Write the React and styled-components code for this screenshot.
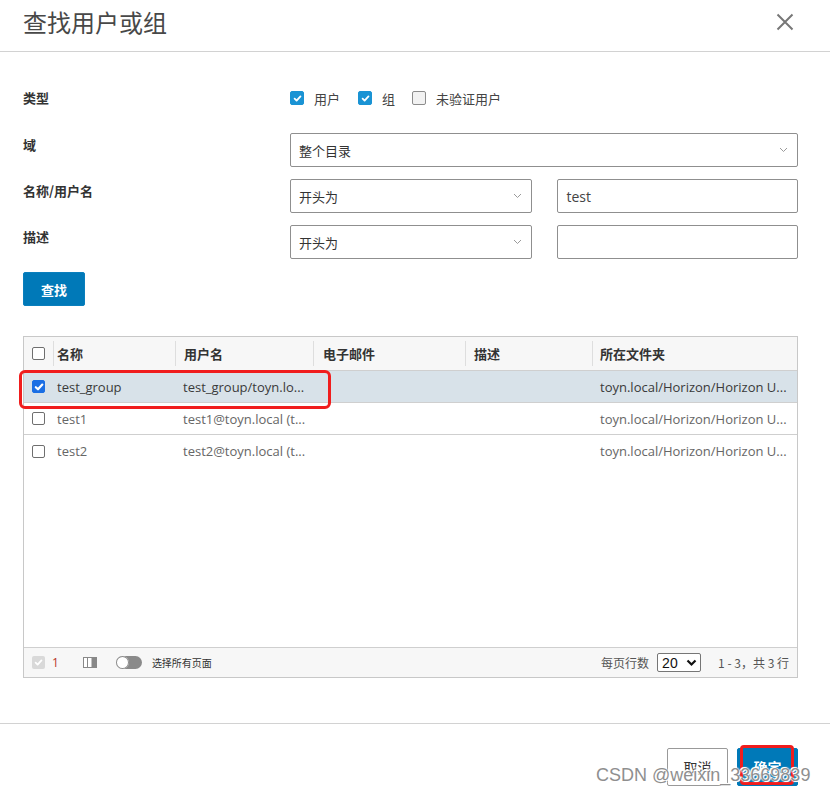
import React from 'react';
import styled, { createGlobalStyle } from 'styled-components';

const Global = createGlobalStyle`
  html, body { margin: 0; padding: 0; background: #fff; }
  body { font-family: "Open Sans", "Noto Sans CJK SC", sans-serif; color: #333; }
  * { box-sizing: border-box; }
`;

const Dialog = styled.div`
  position: relative;
  width: 830px;
  height: 795px;
  display: flex;
  flex-direction: column;
  background: #fff;
  overflow: hidden;
`;

const Header = styled.header`
  height: 52px;
  flex: none;
  display: flex;
  align-items: center;
  justify-content: space-between;
  padding: 0 35px 8px 23px;
  border-bottom: 1px solid #d2d2d2;
`;

const Title = styled.h1`
  margin: 0;
  font-size: 24px;
  font-weight: 400;
  color: #484848;
  line-height: 30px;
  font-family: "Noto Sans CJK SC", sans-serif;
`;

const CloseBtn = styled.button`
  width: 20px;
  height: 20px;
  padding: 0;
  border: 0;
  background: none;
  display: flex;
  align-items: center;
  justify-content: center;
`;

const Body = styled.div`
  flex: 1;
  padding: 36px 32px 0 23px;
  display: flex;
  flex-direction: column;
`;

const Form = styled.div`
  display: flex;
  flex-direction: column;
  gap: 12px;
`;

const Row = styled.div`
  display: grid;
  grid-template-columns: 267px 1fr;
  margin-bottom: ${p => p.$after || 0}px;
`;

const Label = styled.div`
  font-size: 13px;
  font-weight: 700;
  line-height: 20px;
  color: #333;
  padding-top: ${p => p.$top || 0}px;
  font-family: "Noto Sans CJK SC", sans-serif;
`;

const CheckGroup = styled.div`
  display: flex;
  align-items: center;
  height: 20px;
`;

const CheckItem = styled.label`
  display: flex;
  align-items: center;
  font-size: 13px;
  color: #444;
  margin-right: ${p => p.$mr || 0}px;
  font-family: "Noto Sans CJK SC", sans-serif;
`;

const Box = styled.span`
  width: 14px;
  height: 14px;
  border-radius: 2px;
  margin-right: 10px;
  display: inline-flex;
  align-items: center;
  justify-content: center;
  background: ${p => (p.$on ? '#1a93d4' : '#f2f2f2')};
  border: 1px solid ${p => (p.$on ? '#1a93d4' : '#8c8c8c')};
`;

const Fields = styled.div`
  display: grid;
  grid-template-columns: ${p => (p.$split ? '1fr 1fr' : '1fr')};
  gap: 25px;
`;

const Select = styled.div`
  height: 34px;
  border: 1px solid #8f8f8f;
  border-radius: 2px;
  display: flex;
  align-items: center;
  justify-content: space-between;
  padding: 0 9px 0 8px;
  font-size: 13px;
  color: #333;
  font-family: "Noto Sans CJK SC", sans-serif;
`;

const Input = styled.div`
  height: 34px;
  border: 1px solid #8f8f8f;
  border-radius: 2px;
  display: flex;
  align-items: center;
  padding: 0 9px;
  font-size: 14px;
  color: #444;
`;

const Primary = styled.button`
  height: 34px;
  width: 62px;
  border: 1px solid #0a7fbd;
  border-radius: 2px;
  background: #0079b8;
  color: #fff;
  font-size: 13px;
  font-weight: 700;
  font-family: "Noto Sans CJK SC", sans-serif;
  padding: 0;
`;

const SearchWrap = styled.div`
  margin-top: 13px;
`;

const TableWrap = styled.div`
  position: relative;
  margin-top: 30px;
  height: 342px;
  border: 1px solid #c8c8c8;
  display: flex;
  flex-direction: column;
`;

const COLS = '29px 122px 138px 152px 127px 1fr';

const HeadRow = styled.div`
  display: grid;
  grid-template-columns: ${COLS};
  height: 34px;
  background: #f7f7f7;
  border-bottom: 1px solid #cfcfcf;
`;

const HeadCell = styled.div`
  position: relative;
  display: flex;
  align-items: center;
  padding-left: ${p => p.$pl ?? 9}px;
  font-size: 13px;
  font-weight: 700;
  color: #333;
  font-family: "Noto Sans CJK SC", sans-serif;
  ${p => p.$sep && `
    &::before {
      content: '';
      position: absolute;
      left: 0; top: 4px; bottom: 4px;
      width: 1px;
      background: #dedede;
    }
  `}
`;

const BodyRows = styled.div`
  flex: 1;
`;

const DataRow = styled.div`
  display: grid;
  grid-template-columns: ${COLS};
  height: 32px;
  background: ${p => (p.$sel ? '#d8e2e9' : '#fff')};
  border-bottom: ${p => (p.$last ? 'none' : '1px solid #cfcfcf')};
`;

const Cell = styled.div`
  display: flex;
  align-items: center;
  padding-left: ${p => p.$pl ?? 9}px;
  font-size: 13px;
  color: ${p => (p.$sel ? '#3a3a3a' : '#666')};
  white-space: nowrap;
  overflow: hidden;
`;

const CheckCell = styled.div`
  display: flex;
  align-items: center;
  justify-content: center;
`;

const NativeBox = styled.span`
  width: 13px;
  height: 13px;
  border-radius: 2px;
  display: inline-flex;
  align-items: center;
  justify-content: center;
  background: ${p => (p.$on ? '#1b6fe4' : '#fff')};
  border: 1px solid ${p => (p.$on ? '#1b6fe4' : '#6f6f6f')};
`;

const Highlight = styled.div`
  position: absolute;
  left: -5px;
  top: 33px;
  width: 312px;
  height: 39px;
  border: 3px solid #f01d1d;
  border-radius: 6px;
  pointer-events: none;
`;

const TableFoot = styled.div`
  height: 30px;
  border-top: 1px solid #cfcfcf;
  background: #f7f7f7;
  display: flex;
  align-items: center;
  justify-content: space-between;
  padding: 0 8px;
`;

const FootLeft = styled.div`
  display: flex;
  align-items: center;
`;

const FootRight = styled.div`
  display: flex;
  align-items: center;
  font-size: 12px;
  color: #555;
  font-family: "Noto Sans CJK SC", sans-serif;
`;

const DisabledBox = styled.span`
  width: 13px;
  height: 13px;
  border-radius: 2px;
  background: #d9d9d9;
  display: inline-flex;
  align-items: center;
  justify-content: center;
`;

const Count = styled.span`
  font-size: 12px;
  color: #b8352a;
  margin-left: 7px;
  margin-right: 24px;
`;

const Toggle = styled.span`
  position: relative;
  width: 26px;
  height: 13px;
  border-radius: 7px;
  background: #8a8a8a;
  margin-left: 19px;
  margin-right: 10px;
  &::after {
    content: '';
    position: absolute;
    left: 0; top: 0;
    width: 13px; height: 13px;
    border-radius: 50%;
    background: #fff;
    box-shadow: 0 0 0 1px #8a8a8a inset;
  }
`;

const SmallText = styled.span`
  font-size: 10px;
  color: #333;
  font-family: "Noto Sans CJK SC", sans-serif;
`;

const PageSelect = styled.div`
  width: 44px;
  height: 19px;
  border: 1px solid #767676;
  border-radius: 2px;
  background: #fff;
  display: flex;
  align-items: center;
  justify-content: space-between;
  padding: 0 3px 0 4px;
  margin: 0 17px 0 8px;
  font-family: "Liberation Sans", sans-serif;
  font-size: 14px;
  color: #111;
`;

const Bottom = styled.div`
  margin-top: 45px;
  border-top: 1px solid #d2d2d2;
  height: 73px;
  display: flex;
  justify-content: flex-end;
  align-items: flex-start;
  padding: 24px 32px 0 0;
  gap: 9px;
`;

const Btn = styled.button`
  width: 61px;
  height: 38px;
  border-radius: 2px;
  font-size: 14px;
  font-family: "Noto Sans CJK SC", sans-serif;
  padding: 0;
  border: 1px solid ${p => (p.$primary ? '#0079b8' : '#999')};
  background: ${p => (p.$primary ? '#0079b8' : '#fff')};
  color: ${p => (p.$primary ? '#fff' : '#333')};
  font-weight: ${p => (p.$primary ? 700 : 400)};
`;

const BtnMark = styled.div`
  position: absolute;
  left: 740px;
  top: 745px;
  width: 54px;
  height: 40px;
  border: 3px solid #f01d1d;
  border-radius: 4px;
  pointer-events: none;
`;

const Watermark = styled.div`
  position: absolute;
  left: 596px;
  top: 765px;
  font-family: "Liberation Sans", Arial, sans-serif;
  font-size: 18px;
  color: #8f8f8f;
  text-shadow: 0 0 2px #fff, 0 0 2px #fff, 1px 1px 0 #fff, -1px -1px 0 #fff;
  white-space: nowrap;
  pointer-events: none;
`;

const Check = ({ size = 10, color = '#fff', w = 2 }) => (
  <svg width={size} height={size} viewBox="0 0 10 10">
    <path d="M1.8 5.2 L4 7.3 L8.3 2.6" fill="none" stroke={color} strokeWidth={w} strokeLinecap="round" strokeLinejoin="round" />
  </svg>
);

const Chevron = () => (
  <svg width="9" height="6" viewBox="0 0 9 6">
    <path d="M1 1 L4.5 4.5 L8 1" fill="none" stroke="#9a9a9a" strokeWidth="1" />
  </svg>
);

const rows = [
  { name: 'test_group', user: 'test_group/toyn.lo...', folder: 'toyn.local/Horizon/Horizon U...', sel: true },
  { name: 'test1', user: 'test1@toyn.local (t...', folder: 'toyn.local/Horizon/Horizon U...' },
  { name: 'test2', user: 'test2@toyn.local (t...', folder: 'toyn.local/Horizon/Horizon U...' },
];

export default function App() {
  return (
    <Dialog>
      <Global />
      <Header>
        <Title>查找用户或组</Title>
        <CloseBtn aria-label="close">
          <svg width="18" height="18" viewBox="0 0 18 18">
            <path d="M1.5 1.5 L16.5 16.5 M16.5 1.5 L1.5 16.5" stroke="#777" strokeWidth="2" />
          </svg>
        </CloseBtn>
      </Header>
      <Body>
        <Form>
          <Row $after={13}>
            <Label>类型</Label>
            <CheckGroup>
              <CheckItem $mr={18}><Box $on><Check size={9} /></Box>用户</CheckItem>
              <CheckItem $mr={17}><Box $on><Check size={9} /></Box>组</CheckItem>
              <CheckItem><Box />未验证用户</CheckItem>
            </CheckGroup>
          </Row>
          <Row>
            <Label $top={2}>域</Label>
            <Fields>
              <Select>整个目录<Chevron /></Select>
            </Fields>
          </Row>
          <Row>
            <Label $top={2}>名称/用户名</Label>
            <Fields $split>
              <Select>开头为<Chevron /></Select>
              <Input>test</Input>
            </Fields>
          </Row>
          <Row>
            <Label $top={2}>描述</Label>
            <Fields $split>
              <Select>开头为<Chevron /></Select>
              <Input />
            </Fields>
          </Row>
        </Form>
        <SearchWrap>
          <Primary>查找</Primary>
        </SearchWrap>
        <TableWrap>
          <HeadRow>
            <CheckCell><NativeBox /></CheckCell>
            <HeadCell $pl={4} $sep>名称</HeadCell>
            <HeadCell $sep>用户名</HeadCell>
            <HeadCell $pl={10} $sep>电子邮件</HeadCell>
            <HeadCell $sep>描述</HeadCell>
            <HeadCell $pl={8} $sep>所在文件夹</HeadCell>
          </HeadRow>
          <BodyRows>
            {rows.map((r, i) => (
              <DataRow key={r.name} $sel={r.sel} $last={i === rows.length - 1}>
                <CheckCell>
                  <NativeBox $on={r.sel}>{r.sel && <Check size={10} w={2.2} />}</NativeBox>
                </CheckCell>
                <Cell $pl={4} $sel={r.sel}>{r.name}</Cell>
                <Cell $pl={8} $sel={r.sel}>{r.user}</Cell>
                <Cell $sel={r.sel} />
                <Cell $sel={r.sel} />
                <Cell $pl={8} $sel={r.sel}>{r.folder}</Cell>
              </DataRow>
            ))}
          </BodyRows>
          <TableFoot>
            <FootLeft>
              <DisabledBox><Check size={9} /></DisabledBox>
              <Count>1</Count>
              <svg width="14" height="11" viewBox="0 0 14 11">
                <rect x="0.5" y="0.5" width="13" height="10" fill="#fff" stroke="#888" />
                <line x1="4.5" y1="0.5" x2="4.5" y2="10.5" stroke="#888" />
                <rect x="8.5" y="0.5" width="5" height="10" fill="#888" />
              </svg>
              <Toggle />
              <SmallText>选择所有页面</SmallText>
            </FootLeft>
            <FootRight>
              每页行数
              <PageSelect>
                20
                <svg width="11" height="8" viewBox="0 0 11 8">
                  <path d="M1.5 1.5 L5.5 5.5 L9.5 1.5" fill="none" stroke="#111" strokeWidth="2.2" />
                </svg>
              </PageSelect>
              1 - 3，共 3 行
            </FootRight>
          </TableFoot>
          <Highlight />
        </TableWrap>
      </Body>
      <Bottom>
        <Btn>取消</Btn>
        <Btn $primary>确定</Btn>
      </Bottom>
      <BtnMark />
      <Watermark>CSDN @weixin_33669839</Watermark>
    </Dialog>
  );
}
